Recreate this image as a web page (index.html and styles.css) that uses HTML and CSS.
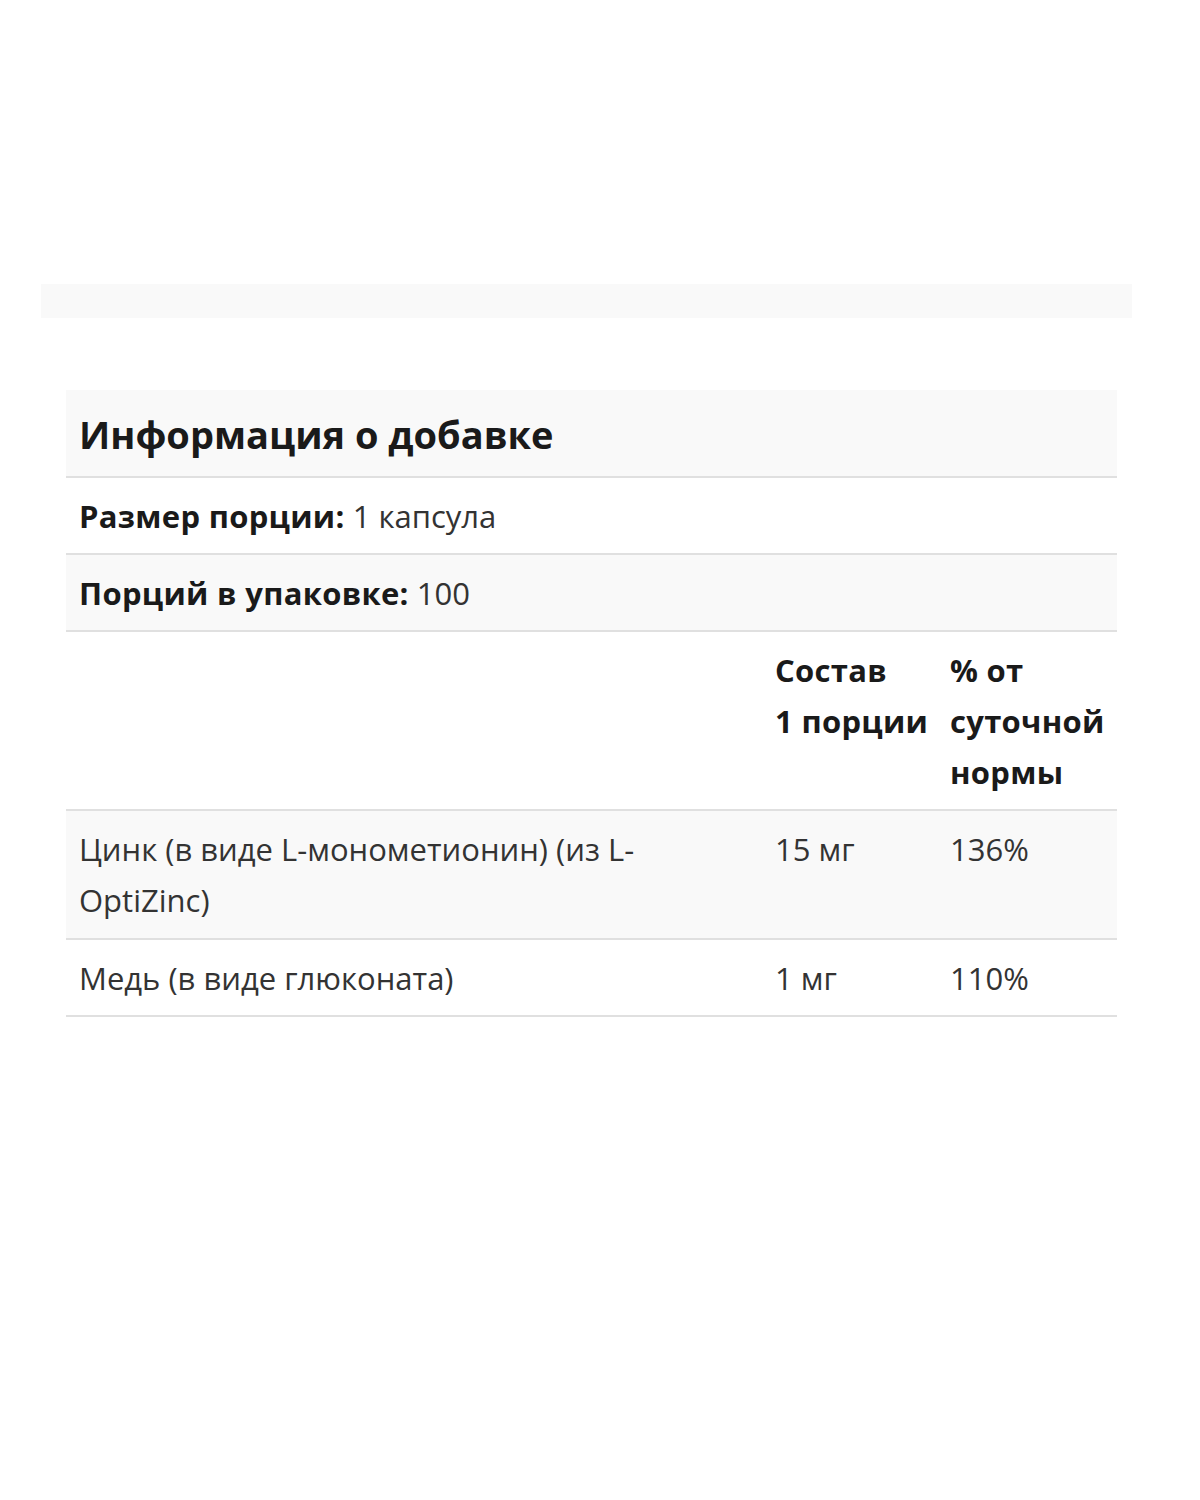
FILE: index.html
```html
<!DOCTYPE html>
<html lang="ru">
<head>
<meta charset="utf-8">
<link rel="stylesheet" href="styles.css">
</head>
<body>
<div class="page">
  <div class="topbar"></div>
  <table class="facts">
    <colgroup>
      <col class="c1">
      <col class="c2">
      <col class="c3">
    </colgroup>
    <tr class="shade">
      <th colspan="3" class="title">Информация о добавке</th>
    </tr>
    <tr>
      <td colspan="3"><b>Размер порции:</b> 1 капсула</td>
    </tr>
    <tr class="shade">
      <td colspan="3"><b>Порций в упаковке:</b> 100</td>
    </tr>
    <tr>
      <td></td>
      <td><b>Состав 1&nbsp;порции</b></td>
      <td><b>% от суточной нормы</b></td>
    </tr>
    <tr class="shade">
      <td class="two">Цинк (в виде L-монометионин) (из L-OptiZinc)</td>
      <td class="two">15 мг</td>
      <td class="two">136%</td>
    </tr>
    <tr>
      <td>Медь (в виде глюконата)</td>
      <td>1 мг</td>
      <td>110%</td>
    </tr>
  </table>
</div>
</body>
</html>
```
FILE: styles.css
```css
html, body {
  margin: 0;
  padding: 0;
  background: #fff;
}
body {
  font-family: "Open Sans", "Noto Sans", sans-serif;
  color: #333;
}
.page {
  width: 1200px;
  height: 1500px;
  padding-top: 284px;
  box-sizing: border-box;
}
.topbar {
  margin-left: 41px;
  width: 1091px;
  height: 34px;
  background: #f9f9f9;
}
.facts {
  margin: 72px 0 0 66px;
  width: 1051px;
  table-layout: fixed;
  border-collapse: collapse;
  font-size: 31px;
  line-height: 51px;
}
.facts td, .facts th {
  padding: 13px 13px 11px;
  border-bottom: 2px solid #e0e0e0;
  text-align: left;
  vertical-align: top;
}
.facts td.two {
  padding-bottom: 12px;
}
.facts b, .facts th {
  font-weight: 700;
  color: #1a1a1a;
}
.facts b {
  letter-spacing: 0.3px;
}
.facts .title {
  font-size: 38px;
  line-height: 62px;
}
.shade {
  background: #f9f9f9;
}
.c1 { width: 696px; }
.c2 { width: 175px; }
.c3 { width: 180px; }
```
